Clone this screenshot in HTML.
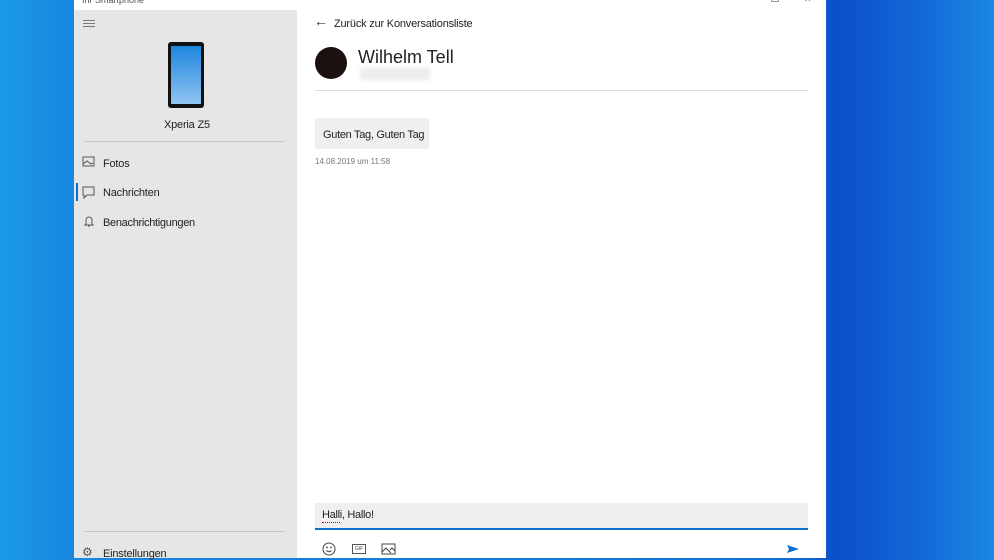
<!DOCTYPE html>
<html><head><meta charset="utf-8"><style>
*{margin:0;padding:0;box-sizing:border-box}
body{width:994px;height:558px;overflow:hidden;position:relative;font-family:"Liberation Sans",sans-serif;
background:linear-gradient(90deg,#1a9ae6 0%,#1888e0 7%,#1070d8 80%,#0b4fc8 84%,#1266d6 92%,#1a88e2 100%)}
.win{position:absolute;left:74px;top:0;width:752px;height:558px;background:#fff}
.title{position:absolute;left:0;top:0;width:752px;height:10px;background:#fff;font-size:9px;color:#555}
.side{position:absolute;left:0;top:10px;width:223px;height:548px;background:#e6e6e6}
.t{position:absolute;white-space:nowrap}
</style></head><body>
<div class="win">
 <div class="title"><span class="t" style="left:8px;top:-5px">Ihr Smartphone</span>
  <span class="t" style="left:697px;top:-3px;width:8px;height:5px;border:1px solid #999"></span>
  <span class="t" style="left:730px;top:-6px;color:#888">✕</span></div>
 <div class="side">
  <div class="t" style="left:9px;top:10px;width:12px;height:1px;background:#777;box-shadow:0 3px 0 #777,0 6px 0 #777"></div>
  <div class="t" style="left:94px;top:32px;width:36px;height:66px;background:#111;border-radius:3px"></div>
  <div class="t" style="left:97px;top:36px;width:30px;height:58px;background:linear-gradient(#1f86e0,#8fc4f0)"></div>
  <div class="t" style="left:90px;top:109px;font-size:11px;color:#222;letter-spacing:-.2px">Xperia Z5</div>
  <div class="t" style="left:10px;top:131px;width:201px;height:1px;background:#c8c8c8"></div>
  <svg class="t" style="left:8px;top:146px" width="14" height="12" viewBox="0 0 14 12" fill="none" stroke="#555"><rect x="1" y="1" width="11" height="9"/><path d="M1 8l4-3 4 3 2-1"/></svg>
  <div class="t" style="left:29px;top:148px;font-size:11px;color:#222;letter-spacing:-.2px">Fotos</div>
  <div class="t" style="left:2px;top:173px;width:2px;height:18px;background:#0a6fcf"></div>
  <svg class="t" style="left:8px;top:176px" width="14" height="13" viewBox="0 0 14 13" fill="none" stroke="#555"><path d="M1 1h11v8H5l-3 3V9H1z"/></svg>
  <div class="t" style="left:29px;top:177px;font-size:11px;color:#222;letter-spacing:-.2px">Nachrichten</div>
  <svg class="t" style="left:9px;top:205px" width="12" height="13" viewBox="0 0 12 13" fill="none" stroke="#555"><path d="M3 9V5a3 3 0 016 0v4l1 1H2zM5 11h2"/></svg>
  <div class="t" style="left:29px;top:207px;font-size:11px;color:#222;letter-spacing:-.3px">Benachrichtigungen</div>
  <div class="t" style="left:10px;top:521px;width:201px;height:1px;background:#c8c8c8"></div>
  <div class="t" style="left:8px;top:535px;font-size:12px;color:#555">⚙</div>
  <div class="t" style="left:29px;top:538px;font-size:11px;color:#222;letter-spacing:-.2px">Einstellungen</div>
 </div>
 <div class="t" style="left:240px;top:13px;font-size:14px;color:#333">←</div>
 <div class="t" style="left:260px;top:18px;font-size:11px;color:#222;letter-spacing:-.2px">Zurück zur Konversationsliste</div>
 <div class="t" style="left:241px;top:47px;width:32px;height:32px;border-radius:50%;background:#1a1010"></div>
 <div class="t" style="left:284px;top:47px;font-size:18px;color:#222">Wilhelm Tell</div>
 <div class="t" style="left:286px;top:68px;width:70px;height:12px;background:#ececec;filter:blur(2px)"></div>
 <div class="t" style="left:241px;top:90px;width:493px;height:1px;background:#ddd"></div>
 <div class="t" style="left:241px;top:118px;width:114px;height:31px;background:#efefef;border-radius:2px"></div>
 <div class="t" style="left:249px;top:129px;font-size:11px;color:#222;letter-spacing:-.3px">Guten Tag, Guten Tag</div>
 <div class="t" style="left:241px;top:157px;font-size:8px;color:#777">14.08.2019 um 11:58</div>
 <div class="t" style="left:241px;top:503px;width:493px;height:27px;background:#efefef;border-bottom:2px solid #0a6fcf"></div>
 <div class="t" style="left:248px;top:509px;font-size:11px;color:#222;letter-spacing:-.3px">Halli, Hallo!</div>
 <div class="t" style="left:248px;top:521px;width:18px;height:2px;border-bottom:1px dotted #d00"></div>
 <svg class="t" style="left:248px;top:542px" width="14" height="14" viewBox="0 0 14 14" fill="none" stroke="#444"><circle cx="7" cy="7" r="6"/><path d="M4.5 8.5q2.5 2.5 5 0"/><circle cx="5" cy="5.5" r=".4"/><circle cx="9" cy="5.5" r=".4"/></svg>
 <div class="t" style="left:278px;top:544px;width:14px;height:10px;border:1px solid #555;font-size:5px;line-height:8px;text-align:center;color:#444">GIF</div>
 <svg class="t" style="left:307px;top:543px" width="15" height="12" viewBox="0 0 15 12" fill="none" stroke="#444"><rect x="1" y="1" width="13" height="10"/><path d="M1 9l4-4 5 5M9 7l2-2 3 3"/></svg>
 <svg class="t" style="left:712px;top:544px" width="14" height="10" viewBox="0 0 14 10"><path d="M1 1l12 4-12 4 2-4z" fill="#0a6fcf"/></svg>
</div>
</body></html>
